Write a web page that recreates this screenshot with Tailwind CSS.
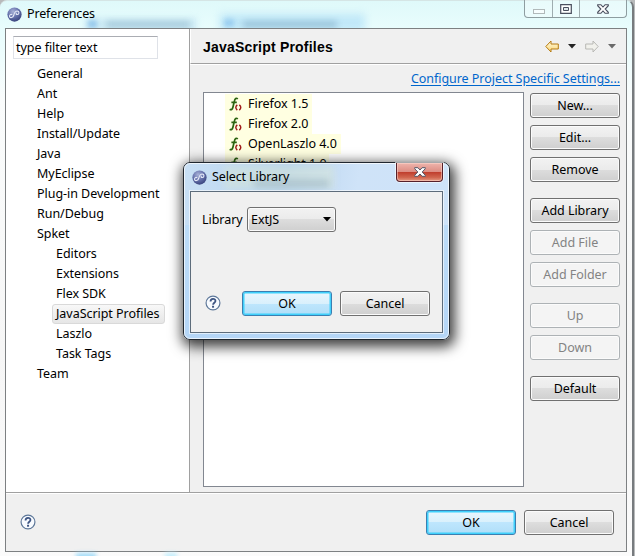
<!DOCTYPE html>
<html lang="en">
<head>
<meta charset="utf-8">
<title>Preferences</title>
<script src="https://cdn.jsdelivr.net/npm/@tailwindcss/browser@4"></script>
</head>
<body class="w-[635px] h-[556px] overflow-hidden relative bg-[#b8babb] font-['Noto_Sans',sans-serif] text-[12.5px] leading-[20px] tracking-[-.04px] text-black cursor-default">
<svg class="absolute w-0 h-0">
  <defs>
    <radialGradient id="orb" cx="40%" cy="30%" r="70%"><stop offset="0" stop-color="#a9b2d8"/><stop offset=".55" stop-color="#6672ac"/><stop offset="1" stop-color="#3b4680"/></radialGradient>
    <linearGradient id="gold" x1="0" y1="0" x2="0" y2="1"><stop offset="0" stop-color="#fffbe0"/><stop offset="1" stop-color="#fbd574"/></linearGradient>
    <symbol id="logo" viewBox="0 0 16 16"><circle cx="8" cy="8" r="7.6" fill="url(#orb)"/><path d="M5.600 8.200C3.800 7.300 2.200 9 2.800 10.300C3.500 11.800 6.500 11.700 7.200 8.800C7.800 6 9 4.200 11 4.200C13.300 4.300 13.300 7.800 11 8C9.800 8 9.500 7 10.200 6.400" fill="none" stroke="#e4e8f6" stroke-width="1.200"/></symbol>
    <symbol id="func" viewBox="0 0 14 15"><path d="M8.800 2C7.300.6 5.900 1.600 5.400 4L3.900 10.300C3.400 12.500 2.200 13.200.7 12.200M2.400 5.300h5.400" fill="none" stroke="#2c6410" stroke-width="1.700"/><path d="M8.300 7.900q-3 2.600 0 5.200M10.300 7.900q3 2.600 0 5.200" fill="none" stroke="#a01818" stroke-width="1.400"/></symbol>
    <symbol id="help" viewBox="0 0 15 15"><circle cx="7.500" cy="7.500" r="6.500" fill="#f8fbff" stroke="#5d7799" stroke-width="1.100"/><path d="M5.200 6.100C5.200 2.800 9.900 2.900 9.800 5.600C9.700 7.300 7.600 7.200 7.600 9.100" fill="none" stroke="#3d5482" stroke-width="1.700"/><path d="M6.600 10.100h1.900v1.800h-1.900z" fill="#3d5482"/></symbol>
    <symbol id="arrow" viewBox="0 0 14 13"><path d="M.8 6.500 6 1v3h7.300v5H6v3z"/></symbol>
  </defs>
</svg>

<div class="w-[634px] h-[560px] rounded-t-[7px] border-t border-r-2 border-t-[#d5e5e5] border-r-[#777b7e] bg-[linear-gradient(180deg,#dff9fa_0px,#e9fdfd_28px,#effdfd_60px,#fafcfc_100px,#f6f6f6_350px,#fbfbfb_560px)] relative">
  <!-- glass title bar -->
  <div class="absolute inset-x-0 top-0 h-[27px] overflow-hidden">
    <div class="absolute left-[85px] top-[17px] w-[112px] h-[14px] bg-[#a9d5ee]/40 blur-[3px]"></div>
    <div class="absolute left-[220px] top-[13px] w-[145px] h-[18px] bg-[#9bd6f5]/50 blur-[4px]"></div>
    <div class="absolute left-[88px] top-[19px] w-[9px] h-[8px] bg-[#4d9ce0]/45 blur-[2.5px]"></div>
    <div class="absolute left-[106px] top-[20px] w-[84px] h-[7px] bg-[#5e8fac]/35 blur-[3px]"></div>
    <div class="absolute left-[224px] top-[18px] w-[10px] h-[8px] bg-[#4d9ce0]/35 blur-[2.5px]"></div>
    <div class="absolute left-[243px] top-[20px] w-[94px] h-[7px] bg-[#5e8fac]/40 blur-[3px]"></div>
  </div>
  <header class="relative h-[27px] flex justify-between">
    <div class="flex items-start pl-[7px] pt-[6px] gap-[5px]"><svg class="w-[15px] h-[15px]"><use href="#logo"/></svg><span class="-mt-[3px] tracking-[-.15px]">Preferences</span></div>
    <div class="h-[18px] -mt-px flex mr-[5px] w-[103px] border border-t-0 border-[#8e9da0] rounded-b-[4px] bg-white/30">
      <div class="w-[28px] border-r border-[#9fadb0] flex justify-center pt-[9px]"><div class="w-[12px] h-[5px] border border-[#b1b9ba] bg-white/60"></div></div>
      <div class="w-[27px] border-r border-[#9fadb0] flex justify-center pt-[4px]"><svg class="w-[12px] h-[10px]" viewBox="0 0 12 10"><path d="M.7.7h10.600v8.600H.7z" fill="#fff" stroke="#4a4f5e" stroke-width="1.200"/><path d="M3.500 3.500h5v3h-5z" fill="#dfe8ea" stroke="#4a4f5e"/></svg></div>
      <div class="flex-1 flex justify-center pt-[4px]"><svg class="w-[12px] h-[10px]" viewBox="0 0 12 10"><path d="M.7.7h3.200L6 3 8.100.7h3.200v1L8.200 5l3.100 3.300v1H8.100L6 7 3.900 9.300H.7v-1L3.800 5 .7 1.700z" fill="#fff" stroke="#4a4f5e" stroke-width="1.100"/></svg></div>
    </div>
  </header>

  <main class="relative ml-[5px] w-[622px] h-[524px] border border-[#7d8082] bg-[#f0f0f0] flex flex-col">
    <div class="h-[463px] flex">
      <aside class="w-[183px] bg-white pl-[7px] pt-[7px]">
        <div class="w-[145px] h-[23px] border border-[#dfe2e8] border-t-[#abadb3] pl-[2px] leading-[21px]">type filter text</div>
        <nav class="pt-[5px] pl-[24px] whitespace-nowrap">
          <div>General</div><div>Ant</div><div>Help</div><div>Install/Update</div><div>Java</div><div>MyEclipse</div><div>Plug-in Development</div><div>Run/Debug</div><div>Spket</div>
          <div class="pl-[19px]">
            <div>Editors</div><div>Extensions</div><div>Flex SDK</div>
            <div class="-ml-[4px] w-[113px] h-[20px] border border-[#d9d9d9] rounded-[3px] bg-linear-to-b from-[#f8f8f8] to-[#e6e6e6] pl-[3px] leading-[18px]">JavaScript Profiles</div>
            <div>Laszlo</div><div>Task Tags</div>
          </div>
          <div>Team</div>
        </nav>
      </aside>
      <section class="flex-1 border-l border-[#a0a0a0] flex flex-col">
        <div class="h-[35px] border-l border-b border-l-white border-b-[#a0a0a0] flex items-center pl-[12px] pr-[10px]">
          <h1 class="flex-1 font-['Liberation_Sans',sans-serif] font-bold text-[14px] tracking-[.2px] pt-[2px]">JavaScript Profiles</h1>
          <div class="flex items-center pt-px">
            <svg class="w-[14px] h-[13px]" fill="url(#gold)" stroke="#b67b13"><use href="#arrow"/></svg>
            <svg class="w-[8px] h-[5px] ml-[9px]"><path d="M0 0h8L4 4.500z" fill="#222"/></svg>
            <svg class="w-[14px] h-[13px] ml-[9px] -scale-x-100" fill="#f1f1ec" stroke="#b8b8b4"><use href="#arrow"/></svg>
            <svg class="w-[8px] h-[5px] ml-[9px]"><path d="M0 0h8L4 4.500z" fill="#6a6a6a"/></svg>
          </div>
        </div>
        <div class="flex-1 border-t border-white flex flex-col pl-[13px] pr-[6px]">
          <div class="h-[27px] text-right pt-[4px] text-[#0066cc] underline underline-offset-2 tracking-[-.04px]">Configure Project Specific Settings...</div>
          <div class="flex gap-[6px]">
            <div class="w-[321px] h-[395px] border border-[#828790] bg-white pl-[21px] pt-px whitespace-nowrap leading-[19px]">
              <div class="w-[87px] h-[20px] bg-[#ffffe1] flex gap-[5px] pl-[4px]"><svg class="w-[14px] h-[15px] mt-[3px]"><use href="#func"/></svg>Firefox 1.5</div>
              <div class="w-[87px] h-[20px] bg-[#ffffe1] flex gap-[5px] pl-[4px]"><svg class="w-[14px] h-[15px] mt-[3px]"><use href="#func"/></svg>Firefox 2.0</div>
              <div class="w-[116px] h-[20px] bg-[#ffffe1] flex gap-[5px] pl-[4px]"><svg class="w-[14px] h-[15px] mt-[3px]"><use href="#func"/></svg>OpenLaszlo 4.0</div>
              <div class="w-[104px] h-[20px] bg-[#ffffe1] flex gap-[5px] pl-[4px]"><svg class="w-[14px] h-[15px] mt-[3px]"><use href="#func"/></svg>Silverlight 1.0</div>
            </div>
            <div class="w-[90px] pt-px flex flex-col gap-[7px] [&>button]:h-[25px] [&>button]:shrink-0 [&>button]:border [&>button]:rounded-[3px] [&>button]:border-[#707070] [&>button]:bg-[linear-gradient(#f2f2f2,#ebebeb_50%,#dddddd_50%,#cfcfcf)] [&>button]:shadow-[inset_0_0_0_1px_#fbfbfb] [&>button:disabled]:bg-none [&>button:disabled]:bg-[#f4f4f4] [&>button:disabled]:border-[#adb2b5] [&>button:disabled]:text-[#838383]">
              <button>New...</button><button>Edit...</button><button>Remove</button>
              <button class="mt-[9px]">Add Library</button><button disabled>Add File</button><button disabled>Add Folder</button>
              <button class="mt-[9px]" disabled>Up</button><button disabled>Down</button>
              <button class="mt-[9px]">Default</button>
            </div>
          </div>
        </div>
      </section>
    </div>
    <footer class="flex-1 border-t border-[#a0a0a0] shadow-[inset_0_1px_0_#fff] flex items-start pt-[17px] pl-[14px] pr-[12px]">
      <svg class="w-[16px] h-[16px] mt-[4px] mr-auto" viewBox="0 0 15 15"><use href="#help"/></svg>
      <button class="w-[90px] h-[25px] border border-[#3c7fb1] rounded-[3px] bg-[linear-gradient(#eaf6fd,#d9f0fc_50%,#bee6fd_50%,#b0def8)] shadow-[inset_0_0_0_1.5px_#3fd0fb]">OK</button>
      <button class="ml-[8px] w-[90px] h-[25px] border border-[#707070] rounded-[3px] bg-[linear-gradient(#f2f2f2,#ebebeb_50%,#dddddd_50%,#cfcfcf)] shadow-[inset_0_0_0_1px_#fbfbfb]">Cancel</button>
    </footer>
  </main>
  <div class="absolute left-[76px] top-[552px] w-[20px] h-[8px] bg-[#8fd4f8]/80 blur-[2px]"></div>
  <div class="absolute left-[165px] top-[552px] w-[12px] h-[8px] bg-[#c4eefc] blur-[2px]"></div>
</div>

<!-- modal -->
<div class="absolute left-[183px] top-[162px] w-[267px] h-[178px] rounded-[7px] border border-[#20272f] shadow-[2px_4px_13px_3px_rgba(0,0,0,.75)] bg-[linear-gradient(180deg,transparent_0,transparent_62px,#bcdcf8_62px,#b5d6f7_100%),linear-gradient(100deg,#c9e0f5,#b9d4ef_35%,#cfe3f8_60%,#cde3f9)]">
  <div class="absolute inset-0 rounded-[6px] border border-white/70"></div>
  <div class="absolute left-[40px] top-[3px] w-[110px] h-[23px] bg-[#dce9cd]/40 blur-[3px]"></div>
  <div class="absolute left-[70px] top-[17px] w-[75px] h-[7px] bg-[#7592a8]/35 blur-[3px]"></div>
  <div class="relative h-[28px] flex pl-[8px] pr-[6px]">
    <svg class="w-[15px] h-[15px] mt-[7px] mr-[5px]"><use href="#logo"/></svg>
    <span class="flex-1 mt-[4px] tracking-[-.12px]">Select Library</span>
    <div class="w-[47px] h-[19px] border border-t-0 border-[#55202a] rounded-b-[4px] bg-[linear-gradient(#eeb5ad,#dd8d83_48%,#bf3c2b_50%,#d0654e_80%,#e59a83)] shadow-[inset_0_0_0_1px_rgba(255,220,210,.5),0_0_0_1px_rgba(255,255,255,.6)] flex justify-center pt-[4px]"><svg class="w-[12px] h-[10px]" viewBox="0 0 12 10"><path d="M.7.7h3.200L6 3 8.100.7h3.200v1L8.200 5l3.100 3.300v1H8.100L6 7 3.900 9.300H.7v-1L3.800 5 .7 1.700z" fill="#fff" stroke="#535666"/></svg></div>
  </div>
  <div class="relative ml-[6px] w-[253px] h-[142px] border border-[#5d6c7b] bg-[#f0f0f0] shadow-[0_0_0_1px_rgba(255,255,255,.6)] flex flex-col">
    <div class="flex items-center pl-[11px] pt-[15px]">
      <span class="w-[45px]">Library</span>
      <div class="w-[89px] h-[25px] border border-[#707070] rounded-[3px] bg-[linear-gradient(#f2f2f2,#ebebeb_50%,#dddddd_50%,#cfcfcf)] shadow-[inset_0_0_0_1px_#fbfbfb] flex items-center pl-[3px] pr-[4px]"><span class="flex-1">ExtJS</span><svg class="w-[8px] h-[5px]"><path d="M0 0h8L4 4.500z"/></svg></div>
    </div>
    <div class="flex mt-[59px] pl-[14px]">
      <svg class="w-[16px] h-[16px] mt-[4px]" viewBox="0 0 15 15"><use href="#help"/></svg>
      <button class="ml-[21px] w-[90px] h-[25px] border border-[#3c7fb1] rounded-[3px] bg-[linear-gradient(#eaf6fd,#d9f0fc_50%,#bee6fd_50%,#b0def8)] shadow-[inset_0_0_0_1.5px_#3fd0fb]">OK</button>
      <button class="ml-[8px] w-[90px] h-[25px] border border-[#707070] rounded-[3px] bg-[linear-gradient(#f2f2f2,#ebebeb_50%,#dddddd_50%,#cfcfcf)] shadow-[inset_0_0_0_1px_#fbfbfb]">Cancel</button>
    </div>
  </div>
</div>
</body>
</html>
